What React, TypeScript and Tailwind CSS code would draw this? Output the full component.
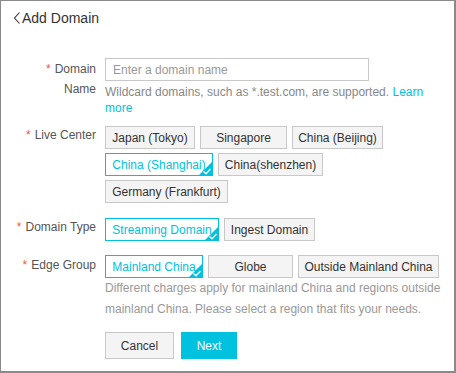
import React from "react";

const font = { fontFamily: '"Liberation Sans", Arial, sans-serif' };

function Opt({ label, selected = false, w }: { label: string; selected?: boolean; w: string }) {
  return (
    <div
      className={
        "relative h-[23px] flex items-center justify-center text-[12px] border " +
        w +
        " " +
        (selected
          ? "border-[#00c1de] text-[#00c1de] bg-white"
          : "border-[#c8c8c8] text-[#333] bg-[#f4f4f4]")
      }
    >
      <span className="whitespace-nowrap">{label}</span>
      {selected && (
        <svg className="absolute right-[-1px] bottom-[-1px]" width="15" height="15" viewBox="0 0 15 15">
          <polygon points="15,0 15,15 0,15" fill="#00c1de" />
          <path d="M5.5 10.5 L8 12.8 L12.5 8" stroke="#fff" strokeWidth="1.4" fill="none" />
        </svg>
      )}
    </div>
  );
}

function Label({ text }: { text: string }) {
  return (
    <div className="text-right text-[12px] text-[#555] leading-[20px] pr-[9px]">
      <span className="text-[#f05a44] mr-[4px]">*</span>
      {text}
    </div>
  );
}

export default function App() {
  return (
    <div
      className="w-[456px] h-[373px] bg-white border-l border-t border-r-2 border-b-2 border-[#8a8a8a] box-border overflow-hidden"
      style={font}
    >
      <div className="flex items-center pl-[12px] pt-[7px] h-[20px] box-content text-[14px] text-[#333]">
        <svg width="8" height="14" viewBox="0 0 8 14" className="mr-[1px]">
          <path d="M6.5 1.5 L1.5 7 L6.5 12.5" stroke="#333" strokeWidth="1.1" fill="none" />
        </svg>
        <span className="leading-[20px]">Add Domain</span>
      </div>

      <div className="grid grid-cols-[104px_1fr] mt-[30px]">
        {/* Domain name */}
        <div>
          <div className="text-right text-[12px] text-[#555] leading-[20px] pr-[9px]">
            <div className="mt-[1px]">
              <span className="text-[#f05a44] mr-[4px]">*</span>Domain
            </div>
            <div>Name</div>
          </div>
        </div>
        <div>
          <div className="w-[264px] h-[23px] border border-[#c8c8c8] flex items-center pl-[7px] text-[12px] text-[#999]">
            Enter a domain name
          </div>
          <div className="text-[12px] text-[#888] leading-[16px] mt-[3px] pr-[20px]">
            <span>Wildcard domains, such as *.test.com, are supported.</span>{" "}
            <span className="text-[#00c1de]">Learn</span>{" "}
            <span className="text-[#00c1de]">more</span>
          </div>
        </div>

        {/* Live Center */}
        <div className="mt-[9px]">
          <Label text="Live Center" />
        </div>
        <div className="mt-[10px] flex flex-col gap-[4px]">
          <div className="flex gap-[5px]">
            <Opt label="Japan (Tokyo)" w="w-[90px]" />
            <Opt label="Singapore" w="w-[87px]" />
            <Opt label="China (Beijing)" w="w-[91px]" />
          </div>
          <div className="flex gap-[5px]">
            <Opt label="China (Shanghai)" selected w="w-[108px]" />
            <Opt label="China(shenzhen)" w="w-[105px]" />
          </div>
          <div className="flex gap-[5px]">
            <Opt label="Germany (Frankfurt)" w="w-[123px]" />
          </div>
        </div>

        {/* Domain Type */}
        <div className="mt-[14px]">
          <Label text="Domain Type" />
        </div>
        <div className="mt-[15px] flex gap-[5px]">
          <Opt label="Streaming Domain" selected w="w-[114px]" />
          <Opt label="Ingest Domain" w="w-[91px]" />
        </div>

        {/* Edge Group */}
        <div className="mt-[14px]">
          <Label text="Edge Group" />
        </div>
        <div className="mt-[14px]">
          <div className="flex gap-[5px]">
            <Opt label="Mainland China" selected w="w-[98px]" />
            <Opt label="Globe" w="w-[85px]" />
            <Opt label="Outside Mainland China" w="w-[141px]" />
          </div>
          <div className="text-[12px] text-[#999] leading-[21px]">
            Different charges apply for mainland China and regions outside mainland China. Please select a region that fits your needs.
          </div>
        </div>

        <div />
        <div className="mt-[12px] flex gap-[7px]">
          <div className="w-[69px] h-[27px] border border-[#c8c8c8] bg-[#f4f4f4] flex items-center justify-center text-[12px] text-[#333]">
            Cancel
          </div>
          <div className="w-[56px] h-[27px] bg-[#00c1de] flex items-center justify-center text-[12px] text-white">
            Next
          </div>
        </div>
      </div>
    </div>
  );
}
